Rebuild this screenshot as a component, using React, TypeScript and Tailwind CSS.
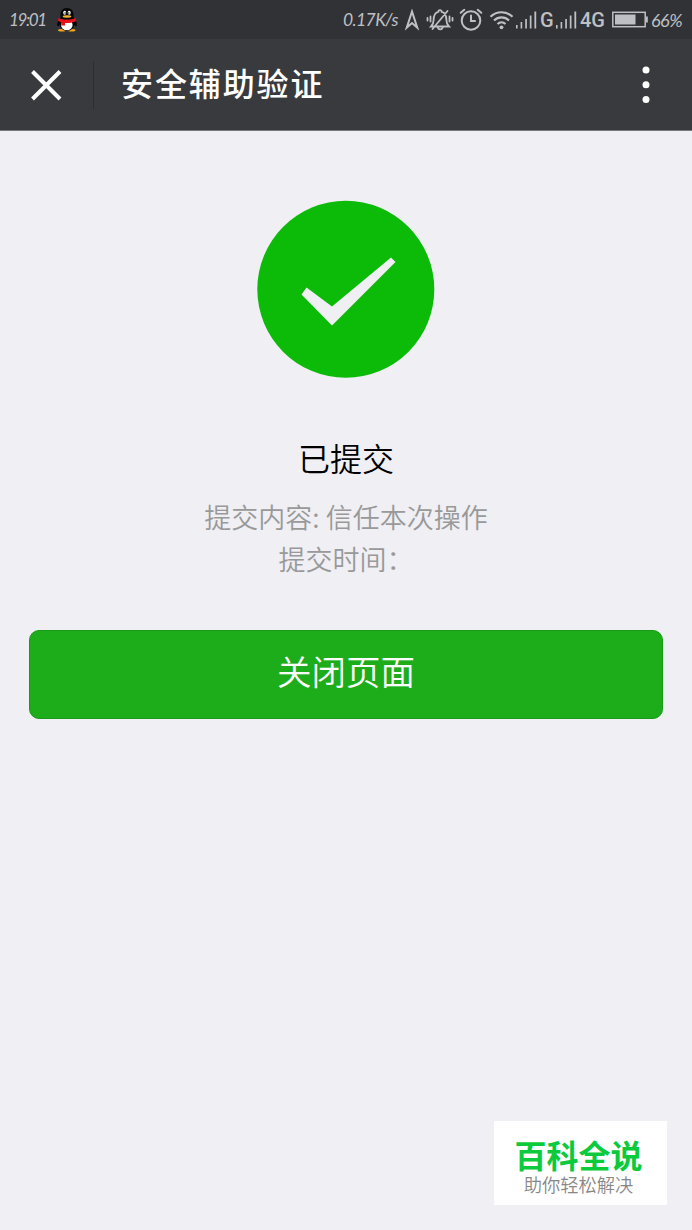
import type { ReactNode } from 'react';

function Penguin() {
  return (
    <svg className="ml-[11px] h-6 w-[22px] shrink-0" viewBox="0 0 22 24">
      <ellipse cx="6" cy="22.2" rx="4" ry="1.3" fill="#f2a51c" />
      <ellipse cx="15.5" cy="22.2" rx="4" ry="1.3" fill="#f2a51c" />
      <path d="M11 0C6.800 0 4.500 3 4.500 7v2.500C2.500 12 .8 15 1.200 17.500c.3 1.500 1.600.5 2.300-.8C4.500 20.500 7.500 22.800 11 22.800s6.500-2.300 7.500-6.100c.7 1.300 2 2.300 2.300.8.400-2.500-1.300-5.500-3.300-8V7c0-4-2.300-7-6.500-7Z" fill="#050505" />
      <ellipse cx="10.800" cy="17" rx="5.800" ry="5.300" fill="#fff" />
      <ellipse cx="8.700" cy="4.800" rx="1.500" ry="2" fill="#fff" />
      <ellipse cx="13.200" cy="4.800" rx="1.500" ry="2" fill="#fff" />
      <circle cx="9.100" cy="5" r=".7" fill="#050505" />
      <circle cx="12.800" cy="5" r=".7" fill="#050505" />
      <ellipse cx="11" cy="8.500" rx="4.300" ry="1.200" fill="#f2b52c" />
      <path d="M2.500 10c4.500 2.200 12.500 2.200 17 0l.6 3c-3.500 1.800-7.600 2.300-11.100 1.900v2.600H5.200v-3.200L2 13Z" fill="#e8121b" />
    </svg>
  );
}

function Signal({ className }: { className: string }) {
  return (
    <svg className={className} viewBox="0 0 21 18" fill="#bfc0c4">
      <rect x="0" y="14" width="1.600" height="3.500" />
      <rect x="4.600" y="11" width="1.600" height="6.500" />
      <rect x="9.200" y="8" width="1.700" height="9.500" />
      <rect x="13.800" y="4.500" width="1.700" height="13" />
      <rect x="18.400" y="0.500" width="1.800" height="17" />
    </svg>
  );
}

function Hand({ className, children }: { className: string; children: ReactNode }) {
  return (
    <span className={`shrink-0 whitespace-nowrap font-['Lato','Noto_Sans',sans-serif] italic leading-none ${className}`}>
      {children}
    </span>
  );
}

function StatusBar() {
  return (
    <div className="flex h-[39px] shrink-0 items-center bg-[#313236] text-[#bfc0c4]">
      <Hand className="ml-[9px] w-9 text-[17px] tracking-[-1.4px]">19:01</Hand>
      <Penguin />
      <Hand className="ml-[265px] w-[56px] text-[17.5px] tracking-[-0.6px]">0.17K/s</Hand>
      <svg className="ml-[6px] h-[22px] w-[14px] shrink-0" viewBox="0 0 14 22" fill="none" stroke="#bfc0c4" strokeWidth="2">
        <path d="M7 2.500 1.800 18.500 7 14l5.200 4.500L7 2.500Z" />
      </svg>
      <svg className="ml-[7px] h-[24px] w-[28px] shrink-0" viewBox="0 0 28 24" fill="none" stroke="#bfc0c4" strokeWidth="1.800" strokeLinecap="round">
        <path d="M5 18.500h18c-2-2-2.600-3.500-2.600-6.500 0-4.500-1.800-7.500-4.700-8.200 0-2.200-3.400-2.200-3.400 0C9.400 4.500 7.600 7.500 7.600 12c0 3-.6 4.500-2.600 6.500ZM11.500 18.500c.5 3.800 5 3.800 5.500 0M21.500 3 6.500 21" />
        <path d="M4.500 8.500v5M1.500 10v2.500M23.500 8.500v5M26.500 10v2.500" />
      </svg>
      <svg className="ml-[5px] h-[24px] w-[24px] shrink-0" viewBox="0 0 24 24" fill="none" stroke="#bfc0c4" strokeWidth="2" strokeLinecap="round">
        <circle cx="12" cy="12.500" r="9.300" />
        <path d="M12 7.500V13h4M1.700 4.800l3.600-3M22.300 4.800l-3.600-3" />
      </svg>
      <svg className="ml-[6px] h-[20px] w-[25px] shrink-0" viewBox="0 0 25 20" fill="none" stroke="#bfc0c4" strokeWidth="2.200">
        <path d="M1.500 6.800c6-6.100 16-6.100 22 0M5 10.500c4.200-4.200 10.800-4.200 15 0M8.500 14c2.300-2.200 5.700-2.200 8 0" />
        <circle cx="12.500" cy="17.300" r="1.900" fill="#bfc0c4" stroke="none" />
      </svg>
      <Signal className="ml-[2px] h-[18px] w-[21px] shrink-0" />
      <span className="ml-[3px] w-[14px] shrink-0 font-['Roboto',sans-serif] text-[20px] font-medium leading-none">G</span>
      <Signal className="ml-[2px] h-[18px] w-[21px] shrink-0" />
      <span className="ml-[3px] w-[27px] shrink-0 font-['Roboto',sans-serif] text-[20px] font-medium leading-none">4G</span>
      <svg className="ml-[5px] h-[17px] w-[36px] shrink-0" viewBox="0 0 36 17">
        <rect x=".8" y="1.300" width="32.400" height="14.400" fill="none" stroke="#bfc0c4" strokeWidth="1.500" />
        <rect x="3" y="3.500" width="20.500" height="10" fill="#bfc0c4" />
        <rect x="34" y="5.500" width="1.800" height="6" fill="#bfc0c4" />
      </svg>
      <Hand className="ml-[3px] w-[34px] text-[18px] tracking-[-0.5px]">66%</Hand>
    </div>
  );
}

export default function App() {
  return (
    <div className="flex h-[1230px] w-[692px] flex-col overflow-hidden bg-[#efeff4] font-['Noto_Sans_CJK_SC',sans-serif]">
      <StatusBar />
      <header className="flex h-[92px] shrink-0 items-center border-b border-[#77787b] bg-[#393a3e]">
        <svg className="ml-[30px] h-8 w-8" viewBox="0 0 32 32" stroke="#fff" strokeWidth="4">
          <path d="M2.500 2.500 30 30M30 2.500 2.500 30" />
        </svg>
        <div className="ml-[31px] h-[48px] w-px bg-[#2c2d30]" />
        <h1 className="ml-[27px] pb-[6px] text-[32px] font-medium leading-none tracking-[1.900px] text-white">安全辅助验证</h1>
        <svg className="ml-auto mr-[42px] h-[38px] w-2" viewBox="0 0 8 38" fill="#fff">
          <circle cx="4" cy="4" r="3.500" />
          <circle cx="4" cy="18.700" r="3.500" />
          <circle cx="4" cy="33.400" r="3.500" />
        </svg>
      </header>

      <main className="flex flex-col items-center px-[29px] pt-[69px]">
        <svg className="h-[178px] w-[178px]" viewBox="0 0 178 178">
          <circle cx="88.800" cy="89.300" r="88.500" fill="#0bbb08" />
          <path d="M49.500 87.500 75 106.500 134 57.500l4.500 4.500L75 125.500 44.500 94.500Z" fill="#efeff4" />
        </svg>
        <h2 className="mt-[55px] text-[32px] font-[350] leading-[48px] text-black">已提交</h2>
        <div className="mt-[15px] text-center text-[27px] font-[350] leading-[42px] text-[#999999]">
          <p>提交内容: 信任本次操作</p>
          <p>提交时间：</p>
        </div>
        <button className="mt-[50px] h-[89px] w-full rounded-[10px] border border-[#1a9a1a] bg-[#1dad1b] pb-[8px] text-[34.500px] font-[350] leading-none text-white">
          关闭页面
        </button>
      </main>

      <aside className="mb-[25px] mr-[25px] mt-auto flex h-[84px] w-[173px] flex-col items-center self-end bg-white pr-1 pt-[17px]">
        <strong className="text-[32px] font-bold leading-[32px] text-[#0bcb3c]">百科全说</strong>
        <span className="mt-[4px] text-[18.300px] font-[350] leading-[20px] text-[#888888]">助你轻松解决</span>
      </aside>
    </div>
  );
}
